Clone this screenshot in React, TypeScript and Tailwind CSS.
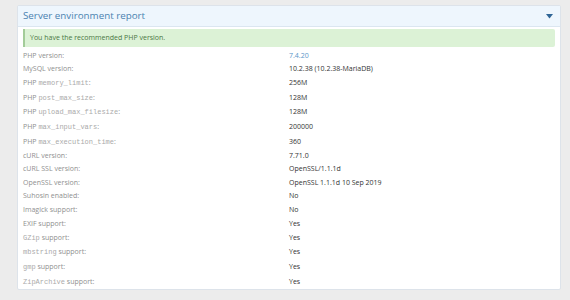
import React from 'react';

type Row = {
  pre?: string;
  code?: string;
  label: string;
  value: string;
  link?: boolean;
};

const rows: Row[] = [
  { label: 'PHP version:', value: '7.4.20', link: true },
  { label: 'MySQL version:', value: '10.2.38 (10.2.38-MariaDB)' },
  { pre: 'PHP ', code: 'memory_limit', label: ':', value: '256M' },
  { pre: 'PHP ', code: 'post_max_size', label: ':', value: '128M' },
  { pre: 'PHP ', code: 'upload_max_filesize', label: ':', value: '128M' },
  { pre: 'PHP ', code: 'max_input_vars', label: ':', value: '200000' },
  { pre: 'PHP ', code: 'max_execution_time', label: ':', value: '360' },
  { label: 'cURL version:', value: '7.71.0' },
  { label: 'cURL SSL version:', value: 'OpenSSL/1.1.1d' },
  { label: 'OpenSSL version:', value: 'OpenSSL 1.1.1d 10 Sep 2019' },
  { label: 'Suhosin enabled:', value: 'No' },
  { label: 'Imagick support:', value: 'No' },
  { label: 'EXIF support:', value: 'Yes' },
  { code: 'GZip', label: ' support:', value: 'Yes' },
  { code: 'mbstring', label: ' support:', value: 'Yes' },
  { code: 'gmp', label: ' support:', value: 'Yes' },
  { code: 'ZipArchive', label: ' support:', value: 'Yes' },
];

const App: React.FC = () => {
  return (
    <div
      className="w-[570px] h-[300px] bg-[#ececec] pt-[5px] px-[17px] pr-[9px]"
      style={{ fontFamily: '"Open Sans", "Noto Sans", sans-serif' }}
    >
      <div className="bg-white border border-[#dde3ea] rounded-[2px] h-[285px]">
        {/* Header */}
        <div className="h-[21px] bg-[#eef6fd] border-b border-[#dbe6f0] flex items-center justify-between pl-[5px] pr-[7px]">
          <h2 className="text-[9.8px] text-[#4a82b0] leading-none">Server environment report</h2>
          <svg width="7" height="5" viewBox="0 0 7 5">
            <path d="M0 0 L7 0 L3.5 4.5 Z" fill="#2f6596" />
          </svg>
        </div>

        <div className="px-[5px] pt-[2px]">
          {/* Notice */}
          <div className="h-[18px] bg-[#dcf2d6] border-l-2 border-[#a3cc99] rounded-r-[2px] flex items-center pl-[5px] text-[7px] text-[#4a7744]">
            You have the recommended PHP version.
          </div>

          {/* Report rows */}
          <div className="mt-[2px] text-[7px]">
            {rows.map(row => (
              <div
                key={row.label + row.value + (row.code ?? '')}
                className={`flex items-center ${row.code ? 'h-[14.6px]' : 'h-[13.6px]'}`}
              >
                <div className="w-[266px] text-[#8f8f8f] whitespace-pre">
                  {row.pre}
                  {row.code && (
                    <code
                      className="text-[7px] text-[#aaaaaa]"
                      style={{ fontFamily: '"Liberation Mono", "Courier New", monospace' }}
                    >
                      {row.code}
                    </code>
                  )}
                  {row.label}
                </div>
                <div className={row.link ? 'text-[#5a96c9]' : 'text-[#333333]'}>{row.value}</div>
              </div>
            ))}
          </div>
        </div>
      </div>
    </div>
  );
};

export default App;
